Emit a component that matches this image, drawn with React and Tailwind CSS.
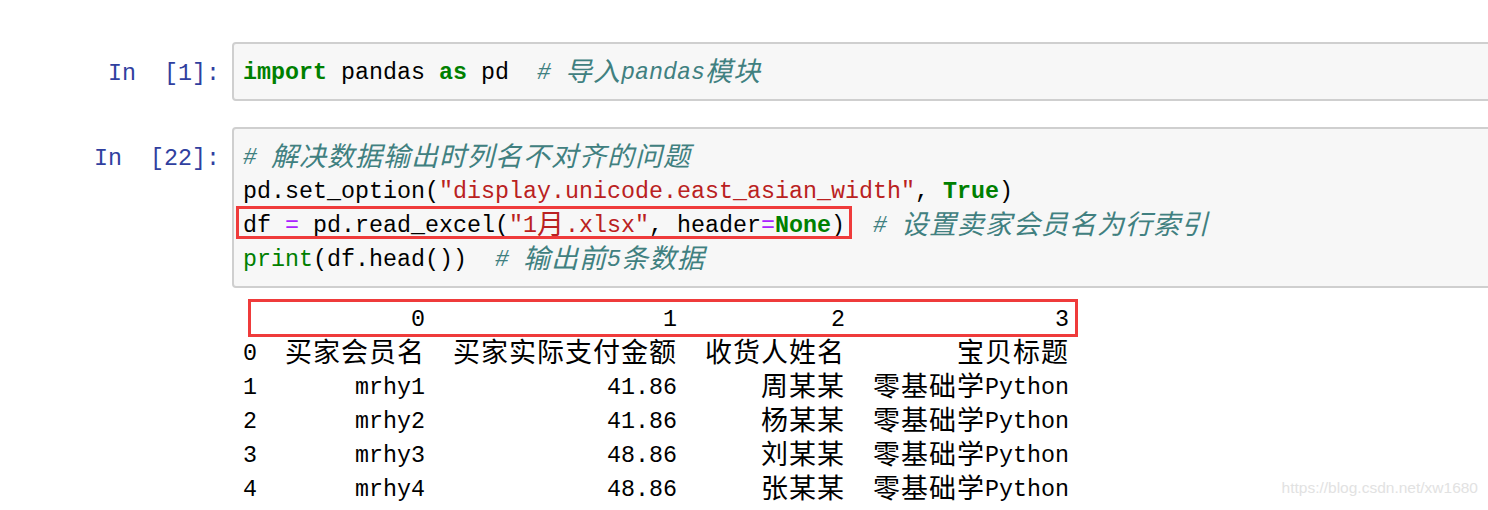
import React from 'react';

const KW = 'text-[#008000] font-bold';
const BI = 'text-[#008000]';
const ST = 'text-[#ba2121]';
const CM = 'text-[#408080] italic';
const OP = 'text-[#aa22ff]';
const PL = 'text-black';

// wide chars get their own span so they take two columns like in the notebook
function Mixed({ text }) {
  const parts = text.split(/([\u3000-\u303f\u3400-\u9fff\uff00-\uffef]+)/);
  return parts.map((p, i) =>
    i % 2 ? (
      <span key={i} className="relative top-[2px] font-['Noto_Sans_CJK_SC',sans-serif] text-[27px] leading-[22px] tracking-[1px]">
        {p}
      </span>
    ) : (
      p
    )
  );
}

function CodeLine({ tokens, children }) {
  return (
    <div className="relative h-[34px] leading-[34px] whitespace-pre">
      {tokens.map(([cls, text], i) => (
        <span key={i} className={cls}>
          <Mixed text={text} />
        </span>
      ))}
      {children}
    </div>
  );
}

function Cell({ n, lines }) {
  return (
    <div className="flex">
      <div className="w-[232px] shrink-0 pr-[12px] pt-[15px] text-right text-[#303f9f] leading-[34px] whitespace-pre">
        {`In  [${n}]:`}
      </div>
      <div className="flex-1 -mr-[24px] rounded-[4px] border-2 border-[#cfcfcf] bg-[#f7f7f7] pl-[9px] pt-[12px] pb-[9px]">
        {lines}
      </div>
    </div>
  );
}

const rows = [
  ['', '0', '1', '2', '3'],
  ['0', '买家会员名', '买家实际支付金额', '收货人姓名', '宝贝标题'],
  ['1', 'mrhy1', '41.86', '周某某', '零基础学Python'],
  ['2', 'mrhy2', '41.86', '杨某某', '零基础学Python'],
  ['3', 'mrhy3', '48.86', '刘某某', '零基础学Python'],
  ['4', 'mrhy4', '48.86', '张某某', '零基础学Python'],
];

export default function App() {
  return (
    <div className="relative w-[1488px] h-[510px] overflow-hidden bg-white pt-[42px] font-['Liberation_Mono',monospace] text-[23.33px] text-black">
      <Cell
        n="1"
        lines={
          <CodeLine
            tokens={[
              [KW, 'import'],
              [PL, ' pandas '],
              [KW, 'as'],
              [PL, ' pd  '],
              [CM, '# 导入pandas模块'],
            ]}
          />
        }
      />

      <div className="mt-[26px]">
        <Cell
          n="22"
          lines={
            <>
              <CodeLine tokens={[[CM, '# 解决数据输出时列名不对齐的问题']]} />
              <CodeLine
                tokens={[
                  [PL, 'pd.set_option('],
                  [ST, '"display.unicode.east_asian_width"'],
                  [PL, ', '],
                  [KW, 'True'],
                  [PL, ')'],
                ]}
              />
              <CodeLine
                tokens={[
                  [PL, 'df '],
                  [OP, '='],
                  [PL, ' pd.read_excel('],
                  [ST, '"1月.xlsx"'],
                  [PL, ', header'],
                  [OP, '='],
                  [KW, 'None'],
                  [PL, ')  '],
                  [CM, '# 设置卖家会员名为行索引'],
                ]}
              >
                <span className="absolute left-[-7px] top-[-3px] w-[616px] h-[33px] border-[3px] border-[#ef3b3b] pointer-events-none" />
              </CodeLine>
              <CodeLine
                tokens={[
                  [BI, 'print'],
                  [PL, '(df.head())  '],
                  [CM, '# 输出前5条数据'],
                ]}
              />
            </>
          }
        />
      </div>

      <div className="relative ml-[243px] mt-[15px] w-[826px]">
        <span className="absolute left-[5px] top-[-4px] w-[830px] h-[38px] border-[3px] border-[#ef3b3b] pointer-events-none" />
        {rows.map((r, i) => (
          <div key={i} className="grid grid-cols-[14px_168px_252px_168px_224px] h-[34px] leading-[34px] whitespace-pre">
            <div className="text-left">{r[0]}</div>
            {r.slice(1).map((c, j) => (
              <div key={j} className="text-right">
                <Mixed text={c} />
              </div>
            ))}
          </div>
        ))}
      </div>

      <div className="absolute right-[10px] bottom-[11px] font-['Liberation_Sans',sans-serif] text-[15.5px] text-[#e2e2e2]">
        https://blog.csdn.net/xw1680
      </div>
    </div>
  );
}
